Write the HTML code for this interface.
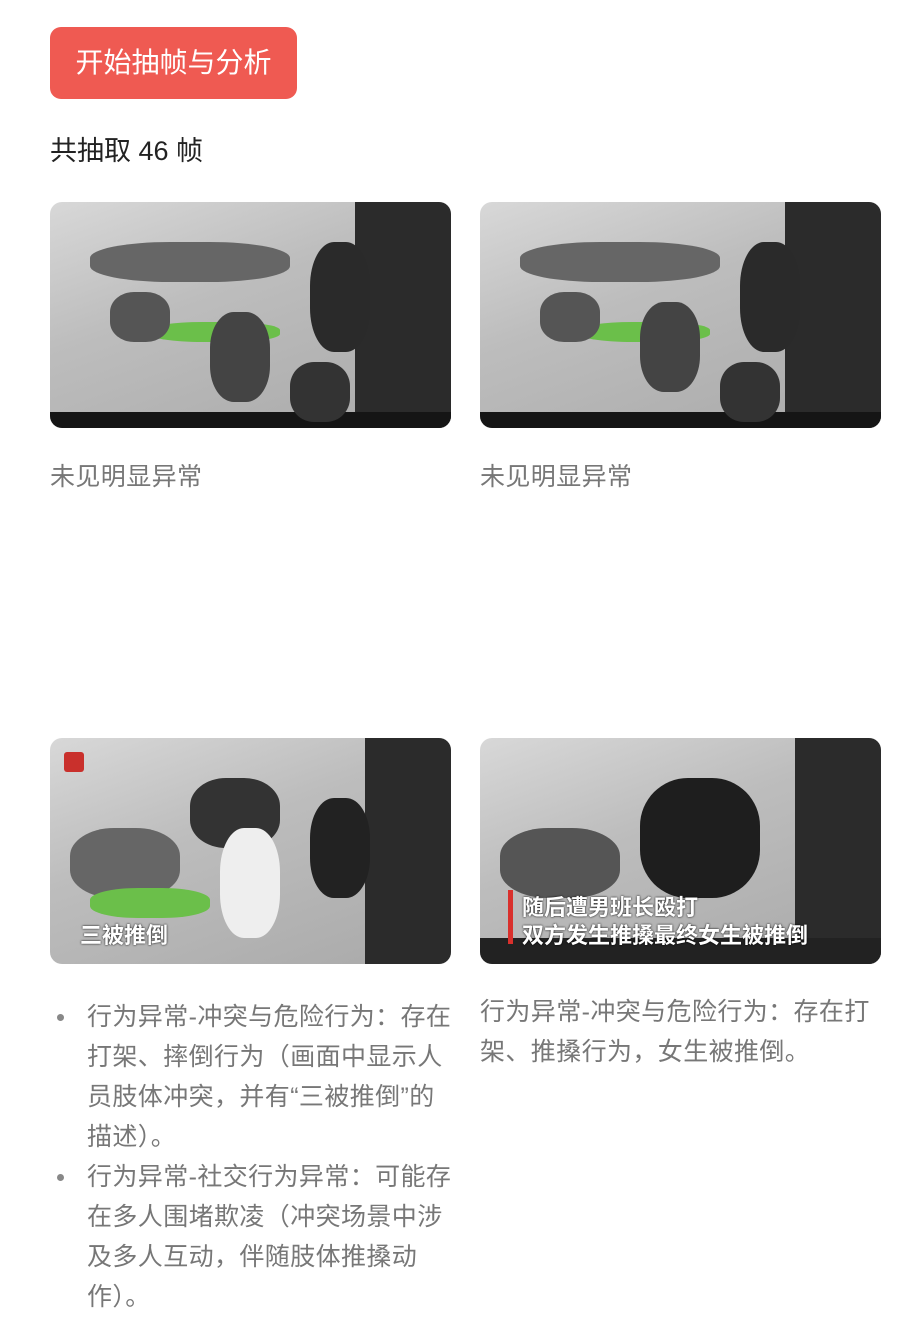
<!DOCTYPE html>
<html><head><meta charset="utf-8"><style>
*{margin:0;padding:0;box-sizing:border-box}
body{width:900px;height:1332px;background:#fff;font-family:"Liberation Sans","Noto Sans CJK SC",sans-serif;position:relative;overflow:hidden}
.btn{position:absolute;left:50px;top:27px;width:247px;height:72px;background:#ef5a52;border-radius:11px;color:#fff;font-size:28px;line-height:72px;text-align:center}
.cnt{position:absolute;left:50px;top:131px;font-size:27px;color:#222;line-height:40px}
.img{position:absolute;width:401px;height:226px;border-radius:12px;overflow:hidden;background:linear-gradient(160deg,#d8d8d8 0%,#bdbdbd 40%,#a9a9a9 100%)}
.img i{position:absolute;display:block;border-radius:40%}
.cap{position:absolute;font-size:25px;color:#777;line-height:40px;letter-spacing:0.4px}
ul{position:absolute;left:50px;top:997px;width:410px;list-style:none;font-size:25px;color:#777;line-height:40px;letter-spacing:0.4px}
li{padding-left:37px;position:relative}
li:before{content:"";position:absolute;left:7px;top:17px;width:7px;height:7px;border-radius:50%;background:#888}
.sub{position:absolute;color:#fff;font-weight:bold;font-size:22px;text-shadow:0 0 2px #000}
</style></head><body>
<div class="btn">开始抽帧与分析</div>
<div class="cnt">共抽取 46 帧</div>

<div class="img" style="left:50px;top:202px">
<i style="left:305px;top:0;width:96px;height:226px;background:#2b2b2b;border-radius:0"></i>
<i style="left:0;top:210px;width:401px;height:16px;background:#151515;border-radius:0"></i>
<i style="left:40px;top:40px;width:200px;height:40px;background:#666"></i>
<i style="left:100px;top:120px;width:130px;height:20px;background:#6bbf4a"></i>
<i style="left:160px;top:110px;width:60px;height:90px;background:#444"></i>
<i style="left:260px;top:40px;width:60px;height:110px;background:#2a2a2a"></i>
<i style="left:60px;top:90px;width:60px;height:50px;background:#555"></i>
<i style="left:240px;top:160px;width:60px;height:60px;background:#333"></i>
</div>
<div class="img" style="left:480px;top:202px">
<i style="left:305px;top:0;width:96px;height:226px;background:#2b2b2b;border-radius:0"></i>
<i style="left:0;top:210px;width:401px;height:16px;background:#151515;border-radius:0"></i>
<i style="left:40px;top:40px;width:200px;height:40px;background:#666"></i>
<i style="left:100px;top:120px;width:130px;height:20px;background:#6bbf4a"></i>
<i style="left:160px;top:100px;width:60px;height:90px;background:#444"></i>
<i style="left:260px;top:40px;width:60px;height:110px;background:#2a2a2a"></i>
<i style="left:60px;top:90px;width:60px;height:50px;background:#555"></i>
<i style="left:240px;top:160px;width:60px;height:60px;background:#333"></i>
</div>
<div class="cap" style="left:50px;top:457px">未见明显异常</div>
<div class="cap" style="left:480px;top:457px">未见明显异常</div>

<div class="img" style="left:50px;top:738px">
<i style="left:315px;top:0;width:86px;height:226px;background:#2b2b2b;border-radius:0"></i>
<i style="left:140px;top:40px;width:90px;height:70px;background:#333"></i>
<i style="left:170px;top:90px;width:60px;height:110px;background:#eee"></i>
<i style="left:260px;top:60px;width:60px;height:100px;background:#222"></i>
<i style="left:20px;top:90px;width:110px;height:70px;background:#666"></i>
<i style="left:40px;top:150px;width:120px;height:30px;background:#6bbf4a"></i>
<i style="left:14px;top:14px;width:20px;height:20px;background:#c9302c;border-radius:3px"></i>
<div class="sub" style="left:30px;top:180px">三被推倒</div>
</div>
<div class="img" style="left:480px;top:738px">
<i style="left:315px;top:0;width:86px;height:226px;background:#2b2b2b;border-radius:0"></i>
<i style="left:160px;top:40px;width:120px;height:120px;background:#1e1e1e"></i>
<i style="left:20px;top:90px;width:120px;height:70px;background:#555"></i>
<i style="left:0;top:200px;width:401px;height:26px;background:#222;border-radius:0"></i>
<i style="left:28px;top:152px;width:5px;height:54px;background:#d9302c;border-radius:0"></i>
<div class="sub" style="left:42px;top:152px">随后遭男班长殴打</div>
<div class="sub" style="left:42px;top:180px">双方发生推搡最终女生被推倒</div>
</div>

<ul>
<li>行为异常-冲突与危险行为：存在打架、摔倒行为（画面中显示人员肢体冲突，并有“三被推倒”的描述）。</li>
<li>行为异常-社交行为异常：可能存在多人围堵欺凌（冲突场景中涉及多人互动，伴随肢体推搡动作）。</li>
</ul>
<div class="cap" style="left:480px;top:992px;width:395px">行为异常-冲突与危险行为：存在打架、推搡行为，女生被推倒。</div>
</body></html>
